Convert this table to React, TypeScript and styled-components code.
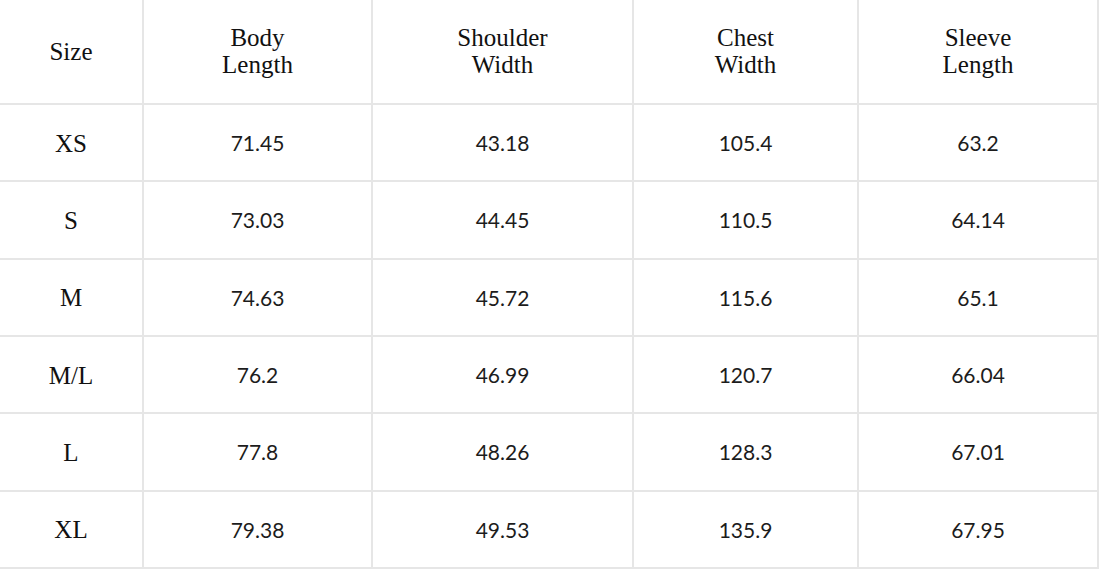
import React from "react";
import styled, {createGlobalStyle} from "styled-components";

const GlobalStyle = createGlobalStyle`
  html, body {
    margin: 0;
    padding: 0;
    background: #fff;
  }
`

const Grid = styled.div`
  display: grid;
  width: 1099px;
  height: 569px;
  grid-template-columns: 144px 229px 261px 225px 240px;
  grid-template-rows: 105px repeat(6, 1fr);
  background: #fff;
`

const Cell = styled.div<{ $serif?: boolean }>`
  box-sizing: border-box;
  display: flex;
  align-items: center;
  justify-content: center;
  text-align: center;
  border-right: 2px solid #e6e6e6;
  border-bottom: 2px solid #e6e6e6;
  color: ${p => p.$serif ? '#111' : '#1c1c1c'};
  font-family: ${p => p.$serif ? '"Liberation Serif", serif' : 'Lato, "Open Sans", sans-serif'};
  font-size: ${p => p.$serif ? '25px' : '21px'};
  line-height: 27px;
  padding-top: ${p => p.$serif ? '1px' : '0'};
`

const HeadCell = styled(Cell)`
  padding-bottom: 2px;
`

const headers = ["Size", "Body\nLength", "Shoulder\nWidth", "Chest\nWidth", "Sleeve\nLength"]

const rows: [string, string, string, string, string][] = [
  ["XS", "71.45", "43.18", "105.4", "63.2"],
  ["S", "73.03", "44.45", "110.5", "64.14"],
  ["M", "74.63", "45.72", "115.6", "65.1"],
  ["M/L", "76.2", "46.99", "120.7", "66.04"],
  ["L", "77.8", "48.26", "128.3", "67.01"],
  ["XL", "79.38", "49.53", "135.9", "67.95"],
]

function App() {
  return (
    <>
      <GlobalStyle />
      <Grid>
        {headers.map(h => (
          <HeadCell $serif key={h}>
            <div>
              {h.split("\n").map((line, i) => <div key={i}>{line}</div>)}
            </div>
          </HeadCell>
        ))}
        {rows.map(row => row.map((v, i) => (
          <Cell $serif={i === 0} key={row[0] + i}>{v}</Cell>
        )))}
      </Grid>
    </>
  );
}

export default App;
